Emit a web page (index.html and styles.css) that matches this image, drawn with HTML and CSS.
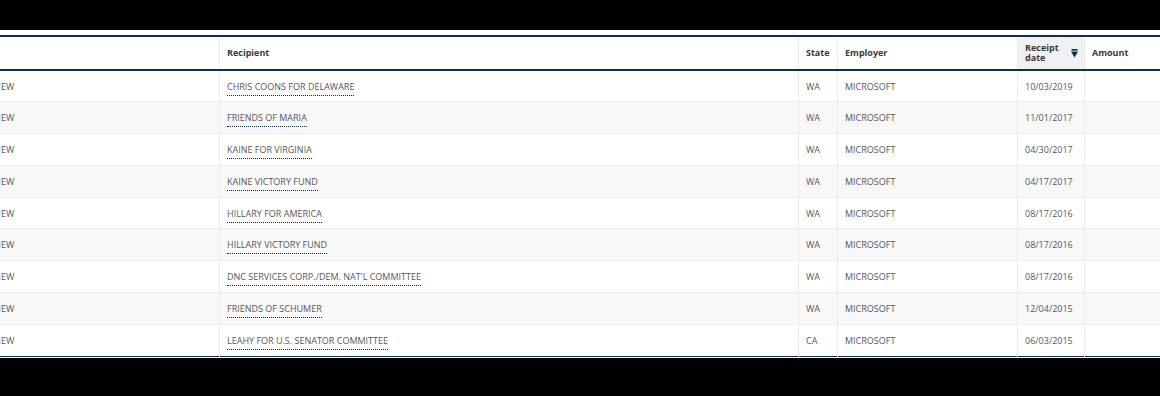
FILE: index.html
```html
<!DOCTYPE html>
<html lang="en">
<head>
<meta charset="utf-8">
<title>Contributions</title>
<link rel="stylesheet" href="styles.css">
</head>
<body>
<div class="frame">
  <table class="data-table">
    <colgroup>
      <col class="c-view">
      <col class="c-recipient">
      <col class="c-state">
      <col class="c-employer">
      <col class="c-date">
      <col class="c-amount">
    </colgroup>
    <thead>
      <tr>
        <th></th>
        <th>Recipient</th>
        <th>State</th>
        <th>Employer</th>
        <th class="sorted"><div class="sort-wrap"><span>Receipt<br>date</span><svg class="sort-icon" width="7" height="9" viewBox="0 0 7 9"><rect x="0.5" y="0" width="6" height="1.6" fill="#112e51"/><path d="M0 2.6 H7 L3.5 8.6 Z" fill="#112e51"/></svg></div></th>
        <th>Amount</th>
      </tr>
    </thead>
    <tbody>
      <tr><td>VIEW</td><td><a class="rec">CHRIS COONS FOR DELAWARE</a></td><td>WA</td><td>MICROSOFT</td><td>10/03/2019</td><td></td></tr>
      <tr><td>VIEW</td><td><a class="rec">FRIENDS OF MARIA</a></td><td>WA</td><td>MICROSOFT</td><td>11/01/2017</td><td></td></tr>
      <tr><td>VIEW</td><td><a class="rec">KAINE FOR VIRGINIA</a></td><td>WA</td><td>MICROSOFT</td><td>04/30/2017</td><td></td></tr>
      <tr><td>VIEW</td><td><a class="rec">KAINE VICTORY FUND</a></td><td>WA</td><td>MICROSOFT</td><td>04/17/2017</td><td></td></tr>
      <tr><td>VIEW</td><td><a class="rec">HILLARY FOR AMERICA</a></td><td>WA</td><td>MICROSOFT</td><td>08/17/2016</td><td></td></tr>
      <tr><td>VIEW</td><td><a class="rec">HILLARY VICTORY FUND</a></td><td>WA</td><td>MICROSOFT</td><td>08/17/2016</td><td></td></tr>
      <tr><td>VIEW</td><td><a class="rec">DNC SERVICES CORP./DEM. NAT'L COMMITTEE</a></td><td>WA</td><td>MICROSOFT</td><td>08/17/2016</td><td></td></tr>
      <tr><td>VIEW</td><td><a class="rec">FRIENDS OF SCHUMER</a></td><td>WA</td><td>MICROSOFT</td><td>12/04/2015</td><td></td></tr>
      <tr><td>VIEW</td><td><a class="rec">LEAHY FOR U.S. SENATOR COMMITTEE</a></td><td>CA</td><td>MICROSOFT</td><td>06/03/2015</td><td></td></tr>
    </tbody>
  </table>
</div>
</body>
</html>
```
FILE: styles.css
```css
html, body {
  margin: 0;
  padding: 0;
  background: #000;
}
body {
  font-family: "Open Sans", "Liberation Sans", sans-serif;
}
.frame {
  margin-top: 30px;
  background: #fff;
  padding-top: 5px;
  padding-bottom: 1px;
  overflow: hidden;
}
.data-table {
  border-collapse: collapse;
  table-layout: fixed;
  width: 1310px;
  margin-left: -15px;
  border-top: 2px solid #112e51;
  border-bottom: 1px solid #112e51;
}
.c-view { width: 234px; }
.c-recipient { width: 579px; }
.c-state { width: 39px; }
.c-employer { width: 180px; }
.c-date { width: 67px; }
.c-amount { width: 211px; }

.data-table th {
  height: 34px;
  padding: 0 7px;
  text-align: left;
  font-size: 9px;
  font-weight: 700;
  color: #3a3a3a;
  line-height: 10px;
  border-left: 1px solid #ececec;
  border-bottom: 2px solid #112e51;
  box-sizing: border-box;
  vertical-align: middle;
}
.data-table th.sorted {
  background: #f1f1f1;
}
.sort-wrap {
  display: flex;
  align-items: center;
  justify-content: space-between;
}
.sort-icon {
  display: block;
  margin-right: -1px;
}
.data-table td {
  height: 31.8px;
  padding: 0 7px;
  font-size: 9px;
  color: #575757;
  border-left: 1px solid #ececec;
  box-sizing: border-box;
  vertical-align: middle;
  white-space: nowrap;
  overflow: hidden;
}
.data-table tbody tr:nth-child(even) td {
  background: #f8f8f8;
}
.data-table tbody tr + tr td {
  border-top: 1px solid #efefef;
}
.rec {
  color: #575757;
  text-decoration: none;
  border-bottom: 1px dotted #112e51;
  padding-bottom: 2px;
}
```
